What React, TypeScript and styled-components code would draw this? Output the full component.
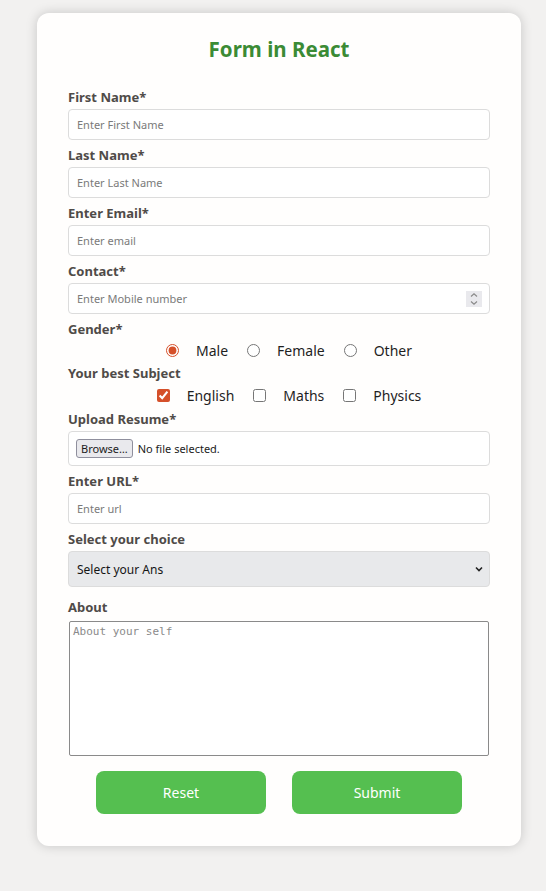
import React, { useState } from "react";
import styled, { createGlobalStyle } from "styled-components";

const GlobalStyle = createGlobalStyle`
  html, body {
    margin: 0;
    padding: 0;
    background: #f2f1f0;
    font-family: "Noto Sans", "Open Sans", sans-serif;
  }
  * { box-sizing: border-box; }
`;

const Page = styled.div`
  padding: 13px 0 45px 37px;
`;

const Card = styled.form`
  width: 484px;
  background: #fffefd;
  border-radius: 12px;
  box-shadow: 0 0 12px rgba(0, 0, 0, 0.18);
  padding: 24px 31px 32px;
  display: flex;
  flex-direction: column;
`;

const Title = styled.h1`
  margin: 0 0 28px;
  text-align: center;
  font-size: 20.5px;
  line-height: 24px;
  font-weight: 700;
  color: #3b8b35;
`;

const Field = styled.div<{ $top?: number }>`
  display: flex;
  flex-direction: column;
  gap: 4px;
  margin-top: ${p => p.$top ?? 0}px;
  margin-bottom: 7px;
`;

const Label = styled.label`
  font-size: 13px;
  line-height: 16px;
  font-weight: 700;
  color: #4f4b48;
`;

const Input = styled.input`
  height: 31px;
  width: 100%;
  border: 1px solid #dcdcdc;
  border-radius: 4px;
  padding: 0 8px;
  font-family: inherit;
  font-size: 11px;
  color: #222;
  background: #fff;
  outline: none;
  &::placeholder {
    color: #7a7a7a;
  }
`;

const NumberBox = styled.div`
  height: 31px;
  display: flex;
  align-items: center;
  border: 1px solid #dcdcdc;
  border-radius: 4px;
  padding: 0 7px 0 8px;
  background: #fff;
`;

const BareInput = styled.input`
  flex: 1;
  border: none;
  outline: none;
  padding: 0;
  font-family: inherit;
  font-size: 11px;
  background: transparent;
  &::placeholder {
    color: #7a7a7a;
  }
`;

const Spinner = styled.div`
  width: 16px;
  height: 16px;
  background: #e9e9ed;
  display: flex;
  align-items: center;
  justify-content: center;
`;

const ChoiceRow = styled.div<{ $top: number; $bottom: number }>`
  display: flex;
  justify-content: center;
  align-items: center;
  padding-left: 20px;
  height: 20px;
  margin: ${p => p.$top}px 0 ${p => p.$bottom}px;
`;

const Choice = styled.label`
  display: flex;
  align-items: center;
  font-size: 14px;
  color: #1f1f1f;
  margin-right: 19px;
  &:last-child {
    margin-right: 0;
  }
`;

const Tick = styled.input`
  margin: 0 17px 0 0;
  width: 13px;
  height: 13px;
  accent-color: #d5502a;
`;

const FileBox = styled.div`
  height: 35px;
  display: flex;
  align-items: center;
  gap: 5px;
  border: 1px solid #dcdcdc;
  border-radius: 4px;
  padding: 0 7px;
  background: #fff;
  font-size: 11px;
  color: #1c1c1c;
`;

const BrowseButton = styled.label`
  height: 19px;
  display: flex;
  align-items: center;
  padding: 0 4px;
  background: #e9e9ed;
  border: 1px solid #8f8f9d;
  border-radius: 3px;
  font-size: 11px;
  color: #1c1c1c;
  cursor: pointer;
`;

const HiddenFile = styled.input`
  display: none;
`;

const SelectBox = styled.div`
  height: 36px;
  display: flex;
  align-items: center;
  background: #e8e9eb;
  border: 1px solid #dcdcdc;
  border-radius: 4px;
  padding: 0 5px 0 8px;
`;

const Select = styled.select`
  flex: 1;
  appearance: none;
  border: none;
  outline: none;
  background: transparent;
  font-family: inherit;
  font-size: 12px;
  color: #151515;
  padding: 0;
`;

const TextArea = styled.textarea`
  height: 135px;
  width: 420px;
  margin: 2px 0 0 1px;
  border: 1px solid #8a8a8a;
  border-radius: 2px;
  padding: 3px;
  resize: none;
  font-family: "DejaVu Sans Mono", monospace;
  font-size: 11px;
  outline: none;
  &::placeholder {
    color: #8a8a8a;
  }
`;

const Actions = styled.div`
  display: flex;
  justify-content: center;
  gap: 26px;
  margin-top: 8px;
`;

const Button = styled.button`
  width: 170px;
  height: 43px;
  border: none;
  border-radius: 8px;
  background: #55bf50;
  color: #fff;
  font-family: inherit;
  font-size: 14px;
  cursor: pointer;
`;

const SpinIcon = () => (
  <svg width="10" height="14" viewBox="0 0 10 14" fill="none" stroke="#8a8a8a" strokeWidth="1.2">
    <path d="M2 4.5 L5 1.8 L8 4.5" />
    <path d="M2 9.5 L5 12.2 L8 9.5" />
  </svg>
);

const Chevron = () => (
  <svg width="10" height="10" viewBox="0 0 10 10" fill="none" stroke="#222" strokeWidth="1.6">
    <path d="M2 3.5 L5 6.5 L8 3.5" />
  </svg>
);

const App = () => {
  const [gender, setGender] = useState("male");
  const [subjects, setSubjects] = useState<Record<string, boolean>>({ english: true, maths: false, physics: false });

  const toggle = (key: string) => setSubjects(s => ({ ...s, [key]: !s[key] }));

  return (
    <>
      <GlobalStyle />
      <Page>
        <Card onSubmit={e => e.preventDefault()}>
          <Title>Form in React</Title>
          <Field>
            <Label>First Name*</Label>
            <Input placeholder="Enter First Name" />
          </Field>
          <Field>
            <Label>Last Name*</Label>
            <Input placeholder="Enter Last Name" />
          </Field>
          <Field>
            <Label>Enter Email*</Label>
            <Input type="email" placeholder="Enter email" />
          </Field>
          <Field>
            <Label>Contact*</Label>
            <NumberBox>
              <BareInput inputMode="numeric" placeholder="Enter Mobile number" />
              <Spinner>
                <SpinIcon />
              </Spinner>
            </NumberBox>
          </Field>
          <Label>Gender*</Label>
          <ChoiceRow $top={3} $bottom={5}>
            {["Male", "Female", "Other"].map(g => (
              <Choice key={g}>
                <Tick
                  type="radio"
                  name="gender"
                  checked={gender === g.toLowerCase()}
                  onChange={() => setGender(g.toLowerCase())}
                />
                {g}
              </Choice>
            ))}
          </ChoiceRow>
          <Label>Your best Subject</Label>
          <ChoiceRow $top={4} $bottom={6}>
            {["English", "Maths", "Physics"].map(s => (
              <Choice key={s}>
                <Tick type="checkbox" checked={subjects[s.toLowerCase()]} onChange={() => toggle(s.toLowerCase())} />
                {s}
              </Choice>
            ))}
          </ChoiceRow>
          <Field>
            <Label>Upload Resume*</Label>
            <FileBox>
              <BrowseButton>
                Browse…
                <HiddenFile type="file" />
              </BrowseButton>
              <span>No file selected.</span>
            </FileBox>
          </Field>
          <Field>
            <Label>Enter URL*</Label>
            <Input type="url" placeholder="Enter url" />
          </Field>
          <Field>
            <Label>Select your choice</Label>
            <SelectBox>
              <Select defaultValue="">
                <option value="" disabled>
                  Select your Ans
                </option>
                <option value="frontend">Frontend</option>
                <option value="backend">Backend</option>
                <option value="fullstack">Full Stack</option>
              </Select>
              <Chevron />
            </SelectBox>
          </Field>
          <Field $top={5}>
            <Label>About</Label>
            <TextArea placeholder="About your self" />
          </Field>
          <Actions>
            <Button type="reset">Reset</Button>
            <Button type="submit">Submit</Button>
          </Actions>
        </Card>
      </Page>
    </>
  );
};

export default App;
